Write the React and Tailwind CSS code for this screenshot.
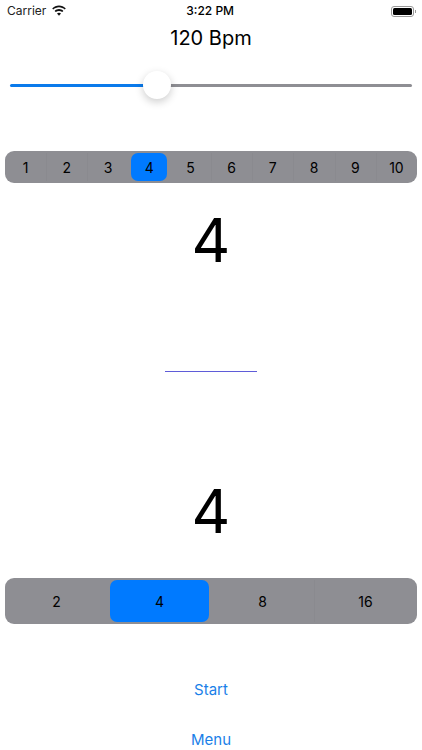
import React from "react";

const WifiIcon = () => (
  <svg width="16" height="12" viewBox="0 0 16 12" fill="#111">
    <path d="M8 2.3c2.2 0 4.2.9 5.7 2.3l1.1-1.2C13 1.6 10.6.5 8 .5S3 1.6 1.2 3.4l1.1 1.2C3.8 3.2 5.8 2.3 8 2.3z" />
    <path d="M8 5.9c1.2 0 2.3.5 3.2 1.2l1.2-1.2C11.2 4.8 9.7 4.1 8 4.1s-3.2.7-4.4 1.8l1.2 1.2C5.7 6.4 6.8 5.9 8 5.9z" />
    <path d="M8 7.7c-.8 0-1.4.3-2 .8l2 2.2 2-2.2c-.6-.5-1.2-.8-2-.8z" />
  </svg>
);

const Segments = ({ items, active, className, activeClass }) => (
  <div className={`mx-[5px] flex items-stretch rounded-[9px] bg-[#8e8e93] py-[2px] ${className}`}>
    {items.map((item, i) => {
      const showDivider = i > 0 && item !== active && items[i - 1] !== active;
      return (
        <div key={item} className="flex min-w-0 flex-1">
          <div
            className={`flex flex-1 items-center justify-center text-[14px] text-black ${
              item === active ? activeClass : ""
            } ${showDivider ? "shadow-[inset_1px_0_0_#8a8a8f]" : ""}`}
          >
            {item}
          </div>
        </div>
      );
    })}
  </div>
);

export default function App() {
  return (
    <div className="h-[750px] w-[422px] overflow-hidden bg-white font-['Inter',sans-serif] text-black">
      <div className="flex h-[22px] items-center justify-between pl-[7px] pr-[6px] text-[12px]">
        <div className="flex items-center gap-[5px] text-[#222]">
          <span>Carrier</span>
          <WifiIcon />
        </div>
        <span className="ml-[-38px] font-medium">3:22 PM</span>
        <div className="flex items-center">
          <div className="rounded-[3px] border border-[#999] p-[1px]">
            <div className="h-[7px] w-[19px] rounded-[1.5px] bg-black" />
          </div>
          <div className="ml-[1px] h-[3px] w-[1px] bg-[#999]" />
        </div>
      </div>

      <div className="mt-[2px] text-center text-[20px] leading-[28px]">120 Bpm</div>

      <div className="relative mx-[10px] mt-[19px] flex h-[28px] items-center">
        <div className="h-[3px] w-[138px] rounded-l-full bg-[#0a7aeb]" />
        <div className="h-[3px] flex-1 rounded-r-full bg-[#8e8e93]" />
        <div className="absolute left-[133px] top-0 h-[28px] w-[28px] rounded-full bg-white shadow-[0_3px_8px_rgba(0,0,0,0.2)]" />
      </div>

      <Segments
        items={[1, 2, 3, 4, 5, 6, 7, 8, 9, 10]}
        active={4}
        className="mt-[52px] h-[32px]"
        activeClass="mx-[2.5px] rounded-[7px] bg-[#007aff]"
      />

      <div className="mt-[22px] text-center text-[60px] leading-[70px]">4</div>

      <div className="mx-auto mt-[96px] h-px w-[92px] bg-[#5f5cd8]" />

      <div className="mt-[104px] text-center text-[60px] leading-[70px]">4</div>

      <Segments
        items={[2, 4, 8, 16]}
        active={4}
        className="mt-[32px] h-[46px]"
        activeClass="mx-[2px] rounded-[7px] bg-[#007aff]"
      />

      <div className="mt-[54px] text-center text-[15px] leading-[24px] text-[#1a7fe8]">Start</div>
      <div className="mt-[26px] text-center text-[15px] leading-[24px] text-[#1a7fe8]">Menu</div>
    </div>
  );
}
